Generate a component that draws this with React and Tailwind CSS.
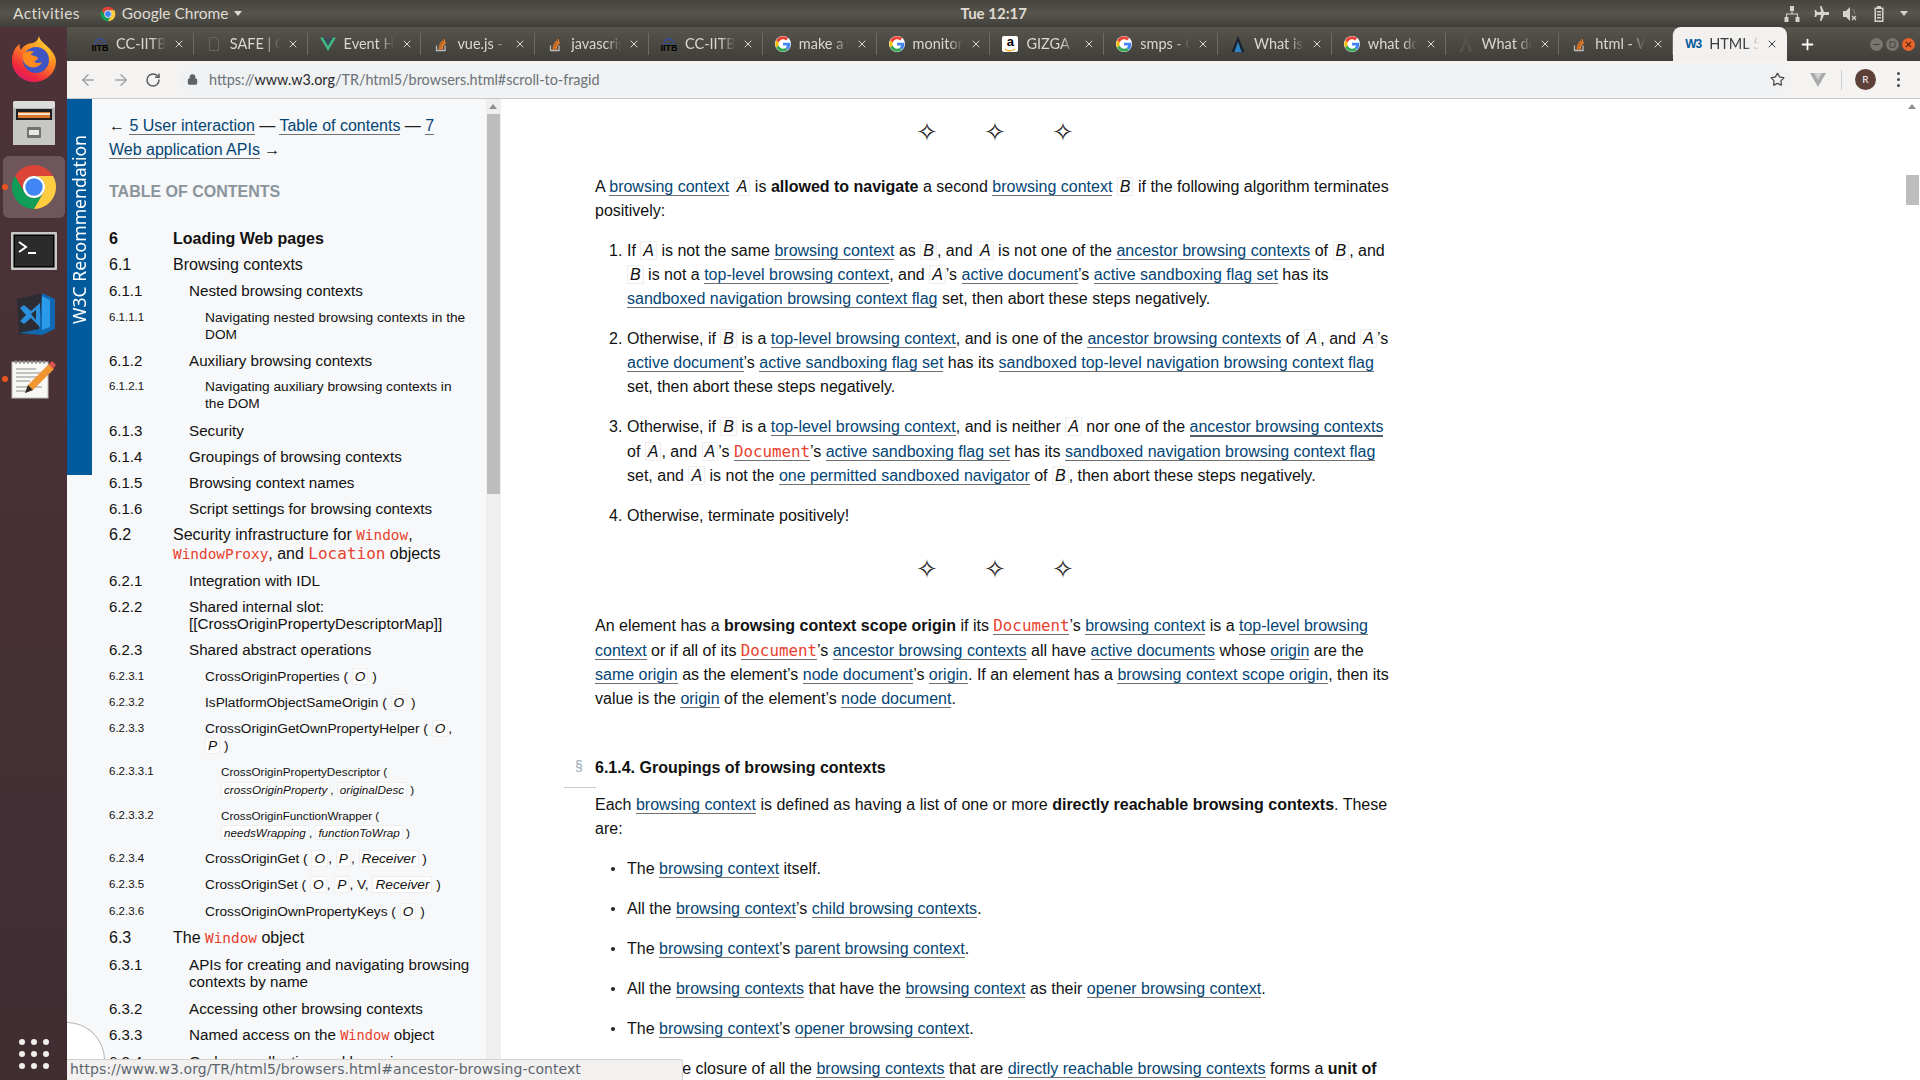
import { X, ArrowLeft, ArrowRight, RotateCw, Lock, Star, Plus, Minus, Square } from "lucide-react";

const L = ({ children, hover }) => (
  <a className={hover ? "text-[#034575] border-b-2 border-[#50606e]" : "text-[#034575] border-b border-[#707070]"}>{children}</a>
);
const V = ({ children }) => (
  <var className="italic border border-[#eeeeee] bg-[#fdfdfd] px-[2px]">{children}</var>
);
const C = ({ children, main, big }) => {
  if (main) return <code className="font-['DejaVu_Sans_Mono',monospace] text-[#e8412e] text-[15.800px] leading-[25px]">{children}</code>;
  if (big) return <code className="font-['DejaVu_Sans_Mono',monospace] text-[#e8412e] text-[16px]">{children}</code>;
  return <code className="font-['DejaVu_Sans_Mono',monospace] text-[#e8412e] text-[0.9em]">{children}</code>;
};

const GoogleG = () => (
  <svg viewBox="0 0 48 48" className="size-4 bg-white rounded-full">
    <path fill="#ea4335" d="M24 10c3.500 0 6.600 1.200 9 3.400l6.500-6.500C35.600 3.300 30.200 1 24 1 15 1 7.300 6.200 3.500 13.700l7.600 5.900C13 14 18 10 24 10z" />
    <path fill="#4285f4" d="M46 24.500c0-1.600-.1-3-.4-4.500H24v8.500h12.400c-.5 2.800-2.100 5.200-4.500 6.800l7.300 5.700C43.400 37 46 31.300 46 24.500z" />
    <path fill="#fbbc05" d="M11.100 28.400c-.5-1.400-.8-2.900-.8-4.400s.3-3 .8-4.400l-7.600-5.900C2 16.800 1 20.300 1 24s1 7.200 2.500 10.300z" />
    <path fill="#34a853" d="M24 47c6.200 0 11.400-2 15.200-5.600l-7.300-5.700c-2 1.400-4.700 2.300-7.900 2.300-6 0-11-4-12.900-9.600l-7.600 5.900C7.300 41.800 15 47 24 47z" />
  </svg>
);
const SoIcon = () => (
  <svg viewBox="0 0 16 16" className="size-4" fill="none" strokeWidth="1.300">
    <path d="M3.500 9.500v5h8.500v-5" stroke="#bcbbbb" />
    <path d="M5.500 12.800h4.500M5.600 10.800l4.400.9M6.200 8.700l4.100 1.800M7.300 6.600l3.600 2.800M8.900 4.800l2.700 3.600M10.800 3.300l1.500 4.300" stroke="#f48024" />
  </svg>
);
const IitbIcon = () => (
  <span className="flex h-[18px] w-4 flex-col items-center">
    <svg viewBox="0 0 16 9" className="h-[9px] w-4" fill="none" stroke="#2a4fc4" strokeWidth="1.600">
      <path d="M3 9a5 5 0 0 1 10 0" strokeDasharray="1.600 0.800" />
      <path d="M5.500 9h5" />
    </svg>
    <span className="text-[9px] leading-[9px] font-bold text-black font-['Liberation_Sans',sans-serif]">IITB</span>
  </span>
);
const DocIcon = () => (
  <svg viewBox="0 0 16 16" className="size-4" fill="none" stroke="#66645e">
    <path d="M3.500 1.500h6l3 3v10h-9z" />
  </svg>
);
const VueIcon = () => (
  <svg viewBox="0 0 16 16" className="size-4">
    <path fill="#41b883" d="M0 1.500h3.300L8 9.800l4.700-8.300H16L8 15z" />
    <path fill="#35495e" d="M3.300 1.500h2.600L8 5.200l2.100-3.700h2.600L8 9.800z" />
  </svg>
);
const AmazonIcon = () => (
  <span className="flex size-4 flex-col items-center rounded-[2px] bg-white">
    <span className="text-[13px] leading-[12px] font-bold text-black font-['Liberation_Sans',sans-serif]">a</span>
    <svg viewBox="0 0 16 4" className="w-3 h-1" fill="none" stroke="#f90" strokeWidth="1.500"><path d="M1 0.500c4 3.500 9 3.500 14 0" /></svg>
  </span>
);
const PeakIcon = ({ dim }) => (
  <svg viewBox="0 0 16 16" className="size-4">
    <path fill={dim ? "#55544f" : "#1a2530"} d="M8 0l6.500 16h-3L8 6 4.500 16h-3z" />
    {!dim && <path fill="#2a86c8" d="M8 6l3.500 10h-7z" />}
  </svg>
);
const W3Icon = () => (
  <span className="flex size-4 items-center text-[12px] font-bold tracking-[-1px] text-[#005a9c] font-['Liberation_Sans',sans-serif]">W3</span>
);

const tabs = [
  { icon: <IitbIcon />, title: "CC-IITB Web" },
  { icon: <DocIcon />, title: "SAFE | Course" },
  { icon: <VueIcon />, title: "Event Handling" },
  { icon: <SoIcon />, title: "vue.js - how" },
  { icon: <SoIcon />, title: "javascript - w" },
  { icon: <IitbIcon />, title: "CC-IITB Web" },
  { icon: <GoogleG />, title: "make a web" },
  { icon: <GoogleG />, title: "monitor size" },
  { icon: <AmazonIcon />, title: "GIZGA 1 Set" },
  { icon: <GoogleG />, title: "smps - Goog" },
  { icon: <PeakIcon />, title: "What is the" },
  { icon: <GoogleG />, title: "what does it" },
  { icon: <PeakIcon dim />, title: "What does" },
  { icon: <SoIcon />, title: "html - What" },
  { icon: <W3Icon />, title: "HTML 5.2: 7", active: true },
];

const Tab = ({ icon, title, active }) => (
  <div className={active ? "flex h-[34px] w-[114px] items-center rounded-t-lg bg-[#f2f1f0] pl-3 text-[#3b3b3b]" : "flex h-[34px] w-[113.800px] items-center pl-3 text-[#d9d7d1]"}>
    {icon}
    <span className="ml-2 w-[50px] overflow-hidden whitespace-nowrap text-[14.500px] [mask-image:linear-gradient(to_right,black_70%,transparent)]">{title}</span>
    <X className="ml-[7px] size-3 shrink-0" strokeWidth={2} />
    {!active && <span className="ml-auto h-[22px] w-px bg-[#6c6b65]" />}
  </div>
);

const Firefox = () => (
  <svg viewBox="0 0 44 46" className="w-[44px] h-[46px]">
    <defs>
      <linearGradient id="ff1" x1="0.800" y1="0" x2="0.200" y2="1">
        <stop offset="0" stopColor="#ffd83a" />
        <stop offset="0.400" stopColor="#ff8a1f" />
        <stop offset="0.800" stopColor="#f0243f" />
        <stop offset="1" stopColor="#d81b7a" />
      </linearGradient>
    </defs>
    <path fill="url(#ff1)" d="M27 0c1 5 5 7 10 12 4 4 7 9 7 13 0 12-10 21-22 21S0 36 0 25C0 17 3 11 8 8c-1 3 0 5 1 6 2-4 7-7 12-7 3-1 5-3 6-7z" />
    <circle cx="24" cy="24" r="13" fill="#3f55c4" />
    <path fill="#ff8a1f" d="M11 18c3-3 8-4 11-2-2 1-3 2-3 3 2 1 6 1 7 3-1 3-4 3-4 3 1 2 5 3 8 1-2 5-9 7-14 4-4-2-6-7-5-12z" />
    <path fill="#ffbf2b" d="M32 8c5 4 8 10 7 17-1-6-4-11-9-14z" />
  </svg>
);
const Files = () => (
  <svg viewBox="0 0 42 44" className="w-[42px] h-[44px]">
    <rect x="0" y="0" width="42" height="44" rx="2" fill="#b4b4b2" />
    <rect x="0" y="0" width="42" height="7" rx="2" fill="#dcdcda" />
    <rect x="3" y="8" width="36" height="11" fill="#1f1f1f" />
    <rect x="5" y="11" width="32" height="6" fill="#d9782f" />
    <rect x="5" y="12" width="32" height="2" fill="#f3e4d0" />
    <rect x="0" y="19" width="42" height="25" fill="#c6c6c4" />
    <rect x="14" y="26" width="14" height="11" rx="1" fill="#74746f" />
    <rect x="16" y="29" width="10" height="5" fill="#e8e8e6" />
  </svg>
);
const ChromeLogo = ({ size }) => (
  <svg viewBox="0 0 48 48" style={{ width: size, height: size }}>
    <path fill="#db4437" d="M4.950 13A22 22 0 0 1 43.050 13H24A11 11 0 0 0 14.470 29.500Z" />
    <path fill="#0f9d58" d="M4.950 13A22 22 0 0 0 24 46L33.530 29.500A11 11 0 0 1 14.470 29.500Z" />
    <path fill="#ffcd40" d="M43.050 13A22 22 0 0 1 24 46L33.530 29.500A11 11 0 0 0 24 13Z" />
    <circle cx="24" cy="24" r="11" fill="#fff" />
    <circle cx="24" cy="24" r="8.700" fill="#4285f4" />
  </svg>
);
const Terminal = () => (
  <svg viewBox="0 0 46 38" className="w-[46px] h-[38px]">
    <rect width="46" height="38" rx="1" fill="#c9c9c7" />
    <rect x="2.500" y="2.500" width="41" height="33" fill="#000" />
    <rect x="4" y="4" width="38" height="30" fill="#2b2b2b" />
    <path d="M8 10l7 5-7 5" fill="none" stroke="#fff" strokeWidth="2" />
    <rect x="17" y="20" width="8" height="2" fill="#fff" />
  </svg>
);
const VsCode = () => (
  <svg viewBox="0 0 42 44" className="w-[42px] h-[44px]">
    <path fill="#2c2c32" d="M4 6l26-6v38L6 42z" />
    <path fill="#0f68b0" d="M29 0l13 6v30l-13 6L6 40l20-4z" />
    <path fill="#2a9be8" d="M29 3l8 4v27l-8 3z" />
    <path fill="#2a8fdc" d="M7 15l4-3 7 6 9-8v24l-9-9-7 6-4-3 6-6z" />
    <path fill="#2c2c32" d="M18 21l5-4v10z" />
  </svg>
);
const Notepad = () => (
  <svg viewBox="0 0 46 40" className="w-[46px] h-[40px]">
    <rect x="1" y="3" width="36" height="36" fill="#f7f7f5" stroke="#bdbdbb" />
    <path d="M4 3h30" stroke="#8a8a88" strokeWidth="3" strokeDasharray="2 2" />
    <path d="M5 10h20M5 14h26M5 18h22M5 22h14M5 28h26M5 32h12" stroke="#8d8d8d" />
    <path d="M14 34l3-8L38 5l5 5-21 21z" fill="#f0952f" />
    <path d="M38 5l3-3 4 4-3 4z" fill="#d9534f" />
    <path d="M14 34l3-8 5 5z" fill="#2c2c2c" />
  </svg>
);

const Dock = () => (
  <aside className="flex w-[67px] shrink-0 flex-col items-center bg-gradient-to-b from-[#4d3339] to-[#3f2d32]">
    <div className="flex h-16 w-full items-center justify-center"><Firefox /></div>
    <div className="flex h-16 w-full items-center justify-center"><Files /></div>
    <div className="relative flex h-16 w-full items-center justify-center">
      <div className="flex size-[62px] items-center justify-center rounded-md bg-[#6e565a]"><ChromeLogo size={48} /></div>
      <span className="absolute left-[2px] top-[29px] size-[6px] rounded-full bg-[#e95420]" />
    </div>
    <div className="flex h-16 w-full items-center justify-center"><Terminal /></div>
    <div className="flex h-16 w-full items-center justify-center"><VsCode /></div>
    <div className="relative flex h-16 w-full items-center justify-center">
      <Notepad />
      <span className="absolute left-[2px] top-[29px] size-[6px] rounded-full bg-[#e95420]" />
    </div>
    <div className="mt-auto mb-[11px] grid grid-cols-3 gap-[6px]">
      {[1, 2, 3, 4, 5, 6, 7, 8, 9].map((i) => (
        <span key={i} className="size-[6px] rounded-full bg-[#f3f1ef]" />
      ))}
    </div>
  </aside>
);

const TopBar = () => (
  <header className="flex h-[27px] shrink-0 items-center bg-gradient-to-b from-[#45443f] via-[#57544c] to-[#3f3e39] text-[15.500px] text-[#dfdbd2] font-['Lato',sans-serif]">
    <span className="ml-[13px] tracking-[0.4px]">Activities</span>
    <span className="ml-[20px]"><ChromeLogo size={16} /></span>
    <span className="ml-[6px]">Google Chrome</span>
    <span className="ml-[5px] h-0 w-0 border-x-4 border-t-[5px] border-x-transparent border-t-[#dfdbd2]" />
    <span className="ml-[719px] w-[70px] whitespace-nowrap font-bold text-[15px]">Tue 12:17</span>
    <div className="ml-auto mr-[12px] flex items-center gap-[13px] text-[#d6d3cb]">
      <svg viewBox="0 0 16 16" className="size-4" fill="currentColor">
        <path d="M6 0h4v5H8.500v2.500H14V11h1.500v5h-4v-5H13V8.500H3V11h1.500v5h-4v-5H2V7.500h5.500V5H6z" />
      </svg>
      <svg viewBox="0 0 16 16" className="size-4" fill="currentColor">
        <path d="M7 0h1.500L11 6h4.500a.5.5 0 0 1 0 3H11l-2.500 6H7l1-6H4l-1 2H1.500L2 7.500 1.500 4H3l1 2h4z" />
      </svg>
      <svg viewBox="0 0 16 16" className="size-4" fill="currentColor">
        <path d="M1 5h3l4-4v14l-4-4H1z" />
        <path d="M10 10l4 4m0-4l-4 4" stroke="currentColor" strokeWidth="1.200" />
        <path d="M10 3c2 1 2.500 3 2.500 5" fill="none" stroke="#8d8b85" />
      </svg>
      <svg viewBox="0 0 16 16" className="size-4" fill="currentColor">
        <path d="M6 0h4v1.500h2.500V16h-9V1.500H6zM5 3v11.500h6V3z" />
        <path d="M6 5h4v1.500H6zM6 8h4v1.500H6zM6 11h4v1.500H6z" />
      </svg>
      <span className="h-0 w-0 border-x-4 border-t-[5px] border-x-transparent border-t-[#d6d3cb]" />
    </div>
  </header>
);

const TabStrip = () => (
  <div className="flex h-[34px] shrink-0 items-center bg-gradient-to-b from-[#57544c] to-[#3f3e39] pl-[13px] font-['Lato',sans-serif]">
    {tabs.map((t, i) => (
      <Tab key={i} {...t} />
    ))}
    <Plus className="ml-[12px] size-[17px] text-white" strokeWidth={2.500} />
    <div className="ml-auto mr-[5px] flex items-center gap-[3px]">
      <span className="flex size-[13px] items-center justify-center rounded-full bg-[#77756e]"><Minus className="size-[9px] text-[#3f3e39]" strokeWidth={3} /></span>
      <span className="flex size-[13px] items-center justify-center rounded-full bg-[#77756e]"><Square className="size-[7px] text-[#3f3e39]" strokeWidth={3} /></span>
      <span className="flex size-[13px] items-center justify-center rounded-full bg-[#e9632c]"><X className="size-[9px] text-[#5a2a14]" strokeWidth={3} /></span>
    </div>
  </div>
);

const Toolbar = () => (
  <div className="flex h-[38px] shrink-0 items-center border-b border-[#c8c8c8] bg-[#f4f3f2] pl-[12px]">
    <ArrowLeft className="size-[18px] text-[#a3a3a3]" strokeWidth={2} />
    <ArrowRight className="ml-[15px] size-[18px] text-[#a3a3a3]" strokeWidth={2} />
    <RotateCw className="ml-[15px] size-[16px] text-[#5a5a5a]" strokeWidth={2.200} />
    <div className="ml-[16px] flex h-[32px] w-[1614px] items-center rounded-2xl bg-[#eff1f2] pl-[10px]">
      <Lock className="size-[11px] text-[#5f6368]" fill="#5f6368" strokeWidth={2.500} />
      <span className="ml-[11px] whitespace-nowrap text-[14.400px] text-[#6b7278] font-['Lato',sans-serif]">
        https://<span className="text-[#2b2b2b]">www.w3.org</span>/TR/html5/browsers.html#scroll-to-fragid
      </span>
      <Star className="ml-auto mr-[6px] size-[15px] text-[#4a4a4a]" strokeWidth={2} />
    </div>
    <svg viewBox="0 0 16 16" className="ml-[19px] size-4">
      <path fill="#a9a9a9" d="M0 1h16L8 15z" />
      <path fill="#d0d0d0" d="M4 1h8L8 8z" />
    </svg>
    <span className="ml-[15px] h-[20px] w-px bg-[#cfcfcf]" />
    <span className="ml-[13px] flex size-[21px] items-center justify-center rounded-full bg-[#5d4037] text-[10px] text-white font-['Lato',sans-serif]">R</span>
    <div className="ml-[21px] flex flex-col gap-[3px]">
      <span className="size-[3px] rounded-full bg-[#4a4a4a]" />
      <span className="size-[3px] rounded-full bg-[#4a4a4a]" />
      <span className="size-[3px] rounded-full bg-[#4a4a4a]" />
    </div>
  </div>
);

const toc = [
  { n: "6", l: 1, t: "Loading Web pages", b: true },
  { n: "6.1", l: 1, t: "Browsing contexts" },
  { n: "6.1.1", l: 2, t: "Nested browsing contexts" },
  { n: "6.1.1.1", l: 3, t: <>Navigating nested browsing contexts in the<br />DOM</> },
  { n: "6.1.2", l: 2, t: "Auxiliary browsing contexts" },
  { n: "6.1.2.1", l: 3, t: <>Navigating auxiliary browsing contexts in<br />the DOM</> },
  { n: "6.1.3", l: 2, t: "Security" },
  { n: "6.1.4", l: 2, t: "Groupings of browsing contexts" },
  { n: "6.1.5", l: 2, t: "Browsing context names" },
  { n: "6.1.6", l: 2, t: "Script settings for browsing contexts" },
  { n: "6.2", l: 1, t: <>Security infrastructure for <C>Window</C>,<br /><C>WindowProxy</C>, and <C big>Location</C> objects</> },
  { n: "6.2.1", l: 2, t: "Integration with IDL" },
  { n: "6.2.2", l: 2, t: <>Shared internal slot:<br />[[CrossOriginPropertyDescriptorMap]]</> },
  { n: "6.2.3", l: 2, t: "Shared abstract operations" },
  { n: "6.2.3.1", l: 3, t: <>CrossOriginProperties ( <V>O</V> )</> },
  { n: "6.2.3.2", l: 3, t: <>IsPlatformObjectSameOrigin ( <V>O</V> )</> },
  { n: "6.2.3.3", l: 3, t: <>CrossOriginGetOwnPropertyHelper ( <V>O</V>,<br /><V>P</V> )</> },
  { n: "6.2.3.3.1", l: 4, t: <>CrossOriginPropertyDescriptor (<br /><V>crossOriginProperty</V>, <V>originalDesc</V> )</> },
  { n: "6.2.3.3.2", l: 4, t: <>CrossOriginFunctionWrapper (<br /><V>needsWrapping</V>, <V>functionToWrap</V> )</> },
  { n: "6.2.3.4", l: 3, t: <>CrossOriginGet ( <V>O</V>, <V>P</V>, <V>Receiver</V> )</> },
  { n: "6.2.3.5", l: 3, t: <>CrossOriginSet ( <V>O</V>, <V>P</V>, V, <V>Receiver</V> )</> },
  { n: "6.2.3.6", l: 3, t: <>CrossOriginOwnPropertyKeys ( <V>O</V> )</> },
  { n: "6.3", l: 1, t: <>The <C>Window</C> object</> },
  { n: "6.3.1", l: 2, t: <>APIs for creating and navigating browsing<br />contexts by name</> },
  { n: "6.3.2", l: 2, t: "Accessing other browsing contexts" },
  { n: "6.3.3", l: 2, t: <>Named access on the <C>Window</C> object</> },
  { n: "6.3.4", l: 2, t: "Garbage collection and browsing" },
];

const TocRow = ({ n, l, t, b }) => {
  const numCls = { 1: "text-[16px]", 2: "text-[15px]", 3: "text-[11.500px]", 4: "text-[11.500px]" }[l];
  const titleCls = {
    1: "ml-[64px] text-[16px]",
    2: "ml-[80px] text-[15.200px]",
    3: "ml-[96px] text-[13.700px]",
    4: "ml-[112px] text-[11.700px]",
  }[l];
  return (
    <li className={`relative mb-[9px] leading-[17.200px] text-[#111] ${b ? "font-bold" : ""}`}>
      <span className={`absolute left-0 top-0 ${numCls}`}>{n}</span>
      <div className={`whitespace-nowrap ${titleCls}`}>{t}</div>
    </li>
  );
};

const Sidebar = () => (
  <div className="flex w-[419px] shrink-0 items-start overflow-hidden bg-[#f7f8f9]">
    <div className="flex h-[376px] w-[25px] shrink-0 justify-center bg-[#005a9c] pt-[36px]">
      <span className="h-fit rotate-180 whitespace-nowrap text-[17.600px] leading-[25px] text-white [writing-mode:vertical-rl] font-['Noto_Sans',sans-serif]">W3C Recommendation</span>
    </div>
    <div className="pl-[17px] pt-[15px]">
      <p className="w-[360px] text-[16px] leading-[24px] text-[#222]">
        <span>←</span> <L>5 User interaction</L> — <L>Table of contents</L> — <L>7</L>
        <br />
        <L>Web application APIs</L> <span>→</span>
      </p>
      <h2 className="mt-[21px] text-[16px] leading-[18px] font-bold text-[#8a949c]">TABLE OF CONTENTS</h2>
      <ol className="mt-[29px]">
        {toc.map((r) => (
          <TocRow key={r.n} {...r} />
        ))}
      </ol>
    </div>
  </div>
);

const Stars = () => (
  <div className="flex justify-center gap-[42px] text-[26px] leading-[24px] text-[#222] font-['DejaVu_Sans',sans-serif]">
    <span className="w-[26px] text-center">✧</span>
    <span className="w-[26px] text-center">✧</span>
    <span className="w-[26px] text-center">✧</span>
  </div>
);

const OlItem = ({ n, children }) => (
  <li className="relative mb-[16px] whitespace-nowrap pl-[32px]">
    <span className="absolute left-[14px] top-0">{n}.</span>
    {children}
  </li>
);
const UlItem = ({ children }) => (
  <li className="relative mb-[16px] whitespace-nowrap pl-[32px]">
    <span className="absolute left-[16px] top-[10px] size-[4px] rounded-full bg-[#222]" />
    {children}
  </li>
);

const Main = () => (
  <main className="w-[1404px] shrink-0 overflow-hidden bg-white pl-[94px] pt-[21px] text-[16px] leading-[24px] text-[#111]">
    <div className="w-[800px]">
      <Stars />
      <p className="mt-[31px] whitespace-nowrap">
        A <L>browsing context</L> <V>A</V> is <b>allowed to navigate</b> a second <L>browsing context</L> <V>B</V> if the following algorithm terminates
        <br />
        positively:
      </p>
      <ol className="mt-[16px]">
        <OlItem n={1}>
          If <V>A</V> is not the same <L>browsing context</L> as <V>B</V>, and <V>A</V> is not one of the <L>ancestor browsing contexts</L> of <V>B</V>, and
          <br />
          <V>B</V> is not a <L>top-level browsing context</L>, and <V>A</V>’s <L>active document</L>’s <L>active sandboxing flag set</L> has its
          <br />
          <L>sandboxed navigation browsing context flag</L> set, then abort these steps negatively.
        </OlItem>
        <OlItem n={2}>
          Otherwise, if <V>B</V> is a <L>top-level browsing context</L>, and is one of the <L>ancestor browsing contexts</L> of <V>A</V>, and <V>A</V>’s
          <br />
          <L>active document</L>’s <L>active sandboxing flag set</L> has its <L>sandboxed top-level navigation browsing context flag</L>
          <br />
          set, then abort these steps negatively.
        </OlItem>
        <OlItem n={3}>
          Otherwise, if <V>B</V> is a <L>top-level browsing context</L>, and is neither <V>A</V> nor one of the <L hover>ancestor browsing contexts</L>
          <br />
          of <V>A</V>, and <V>A</V>’s <L><C main>Document</C></L>’s <L>active sandboxing flag set</L> has its <L>sandboxed navigation browsing context flag</L>
          <br />
          set, and <V>A</V> is not the <L>one permitted sandboxed navigator</L> of <V>B</V>, then abort these steps negatively.
        </OlItem>
        <OlItem n={4}>Otherwise, terminate positively!</OlItem>
      </ol>
      <div className="mt-[29px]"><Stars /></div>
      <p className="mt-[32px] whitespace-nowrap">
        An element has a <b>browsing context scope origin</b> if its <L><C main>Document</C></L>’s <L>browsing context</L> is a <L>top-level browsing</L>
        <br />
        <L>context</L> or if all of its <L><C main>Document</C></L>’s <L>ancestor browsing contexts</L> all have <L>active documents</L> whose <L>origin</L> are the
        <br />
        <L>same origin</L> as the element’s <L>node document</L>’s <L>origin</L>. If an element has a <L>browsing context scope origin</L>, then its
        <br />
        value is the <L>origin</L> of the element’s <L>node document</L>.
      </p>
      <div className="relative mt-[45px]">
        <span className="absolute left-[-20px] top-0 text-[14px] leading-[20px] text-[#9aa7b3]">§</span>
        <h3 className="font-bold">6.1.4. Groupings of browsing contexts</h3>
        <span className="absolute left-[-31px] top-[31px] h-px w-[32px] bg-[#cccccc]" />
      </div>
      <p className="mt-[13px] whitespace-nowrap">
        Each <L>browsing context</L> is defined as having a list of one or more <b>directly reachable browsing contexts</b>. These
        <br />
        are:
      </p>
      <ul className="mt-[16px]">
        <UlItem>The <L>browsing context</L> itself.</UlItem>
        <UlItem>All the <L>browsing context</L>’s <L>child browsing contexts</L>.</UlItem>
        <UlItem>The <L>browsing context</L>’s <L>parent browsing context</L>.</UlItem>
        <UlItem>All the <L>browsing contexts</L> that have the <L>browsing context</L> as their <L>opener browsing context</L>.</UlItem>
        <UlItem>The <L>browsing context</L>’s <L>opener browsing context</L>.</UlItem>
      </ul>
      <p className="whitespace-nowrap">
        The transitive closure of all the <L>browsing contexts</L> that are <L>directly reachable browsing contexts</L> forms a <b>unit of</b>
      </p>
    </div>
  </main>
);

const Scrollbar = ({ thumbTop, thumbH, thumbCls, trackCls }) => (
  <div className={`relative w-[15px] shrink-0 ${trackCls}`}>
    <span className="absolute left-[3px] top-[5px] h-0 w-0 border-x-[4px] border-b-[5px] border-x-transparent border-b-[#8f8f8f]" />
    <span className={`absolute left-px w-[13px] ${thumbCls}`} style={{ top: thumbTop, height: thumbH }} />
  </div>
);

export default function App() {
  return (
    <div className="relative flex h-[1080px] w-[1920px] flex-col overflow-hidden font-['Liberation_Sans',Arial,sans-serif]">
      <TopBar />
      <div className="flex min-h-0 flex-1">
        <Dock />
        <div className="flex min-w-0 flex-1 flex-col">
          <TabStrip />
          <Toolbar />
          <div className="flex min-h-0 flex-1">
            <Sidebar />
            <Scrollbar thumbTop={15} thumbH={380} thumbCls="bg-[#bdbdbd]" trackCls="bg-[#efefef]" />
            <Main />
            <Scrollbar thumbTop={76} thumbH={30} thumbCls="bg-[#bdbdbd]" trackCls="bg-white" />
          </div>
        </div>
      </div>
      <div className="absolute bottom-[20px] left-[67px] h-[38px] w-[38px] rounded-tr-[38px] border-t border-r border-[#b5b5b5] bg-white" />
      <div className="absolute bottom-0 left-[67px] flex h-[21px] w-[616px] items-center rounded-tr-[3px] border-t border-r border-[#d4d2cf] bg-[#f2f1ef] pb-[2px] pl-[3px] text-[14px] tracking-[0.07px] whitespace-nowrap text-[#5c6670] font-['DejaVu_Sans',sans-serif]">
        https://www.w3.org/TR/html5/browsers.html#ancestor-browsing-context
      </div>
    </div>
  );
}
